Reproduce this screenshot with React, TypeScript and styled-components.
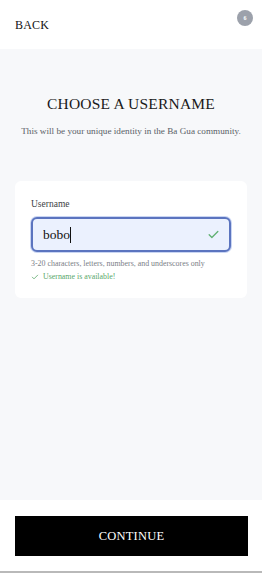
import React, { useState } from 'react'
import styled, { createGlobalStyle } from 'styled-components'

const GlobalStyle = createGlobalStyle`
  html, body { margin: 0; padding: 0; }
  body { font-family: "Liberation Serif", "DejaVu Serif", serif; background: #ffffff; }
  * { box-sizing: border-box; }
`

const Screen = styled.div`
  display: flex;
  flex-direction: column;
  width: 262px;
  height: 573px;
  background: #ffffff;
`

const Header = styled.div`
  display: flex;
  align-items: center;
  justify-content: space-between;
  height: 49px;
  padding: 2px 9px 0 15px;
`

const BackButton = styled.button`
  border: none;
  background: none;
  padding: 0;
  font-family: inherit;
  font-size: 12px;
  color: #111111;
  letter-spacing: 0.2px;
  cursor: pointer;
`

const Badge = styled.div`
  display: flex;
  align-items: center;
  justify-content: center;
  width: 16px;
  height: 16px;
  margin-bottom: 16px;
  border-radius: 50%;
  background: #9ca1ab;
  color: #ffffff;
  font-size: 6px;
  font-weight: bold;
`

const Main = styled.div`
  flex: 1;
  display: flex;
  flex-direction: column;
  align-items: center;
  background: #f7f8fa;
  padding: 46px 15px 0;
`

const Title = styled.h1`
  margin: 0;
  font-size: 15.5px;
  font-weight: normal;
  letter-spacing: 0.2px;
  color: #1a1a1a;
`

const Subtitle = styled.p`
  margin: 13px 0 0;
  font-size: 9.2px;
  color: #5a5f67;
  text-align: center;
`

const Card = styled.div`
  align-self: stretch;
  margin-top: 45px;
  background: #ffffff;
  border-radius: 6px;
  padding: 18px 16px 17px;
`

const Label = styled.div`
  font-size: 9.5px;
  color: #3c3f45;
  margin-bottom: 8px;
`

const InputWrap = styled.div`
  display: flex;
  align-items: center;
  height: 35px;
  padding: 0 9px 0 10px;
  border: 2px solid #5b74bf;
  border-radius: 6px;
  background: #ebf1fe;
  box-shadow: 0 0 0 1px #c9d5f3;
`

const Input = styled.input`
  flex: none;
  min-width: 0;
  border: none;
  outline: none;
  background: transparent;
  font-family: inherit;
  font-size: 13.5px;
  color: #111111;
  padding: 0;
`

const Caret = styled.span`
  width: 1px;
  height: 16px;
  background: #111111;
`

const Spacer = styled.div`
  flex: 1;
`

const Hint = styled.div`
  margin-top: 7px;
  font-size: 7.9px;
  color: #7a7e86;
`

const Status = styled.div`
  display: flex;
  align-items: center;
  gap: 4px;
  margin-top: 4px;
  font-size: 7.9px;
  color: #5aa76a;
`

const Footer = styled.div`
  padding: 16px 14px 15px 15px;
  border-bottom: 2px solid #b9b9b9;
  background: #ffffff;
`

const ContinueButton = styled.button`
  width: 100%;
  height: 40px;
  border: none;
  background: #000000;
  color: #ffffff;
  font-family: inherit;
  font-size: 12.5px;
  letter-spacing: 0.2px;
  cursor: pointer;
`

const Check = ({ size, color }: { size: number; color: string }) => (
  <svg width={size} height={size} viewBox="0 0 24 24" fill="none" stroke={color} strokeWidth={2.4} strokeLinecap="round" strokeLinejoin="round">
    <path d="M4 12.5l5 5L20 6.5" />
  </svg>
)

export default function App() {
  const [name, setName] = useState('bobo')
  return (
    <>
      <GlobalStyle />
      <Screen>
        <Header>
          <BackButton>BACK</BackButton>
          <Badge>6</Badge>
        </Header>
        <Main>
          <Title>CHOOSE A USERNAME</Title>
          <Subtitle>This will be your unique identity in the Ba Gua community.</Subtitle>
          <Card>
            <Label>Username</Label>
            <InputWrap>
              <Input value={name} onChange={e => setName(e.target.value)} style={{ width: `${name.length * 6.8}px` }} />
              <Caret />
              <Spacer />
              <Check size={13} color="#5fb071" />
            </InputWrap>
            <Hint>3-20 characters, letters, numbers, and underscores only</Hint>
            <Status>
              <Check size={8} color="#5aa76a" />
              Username is available!
            </Status>
          </Card>
        </Main>
        <Footer>
          <ContinueButton>CONTINUE</ContinueButton>
        </Footer>
      </Screen>
    </>
  )
}
